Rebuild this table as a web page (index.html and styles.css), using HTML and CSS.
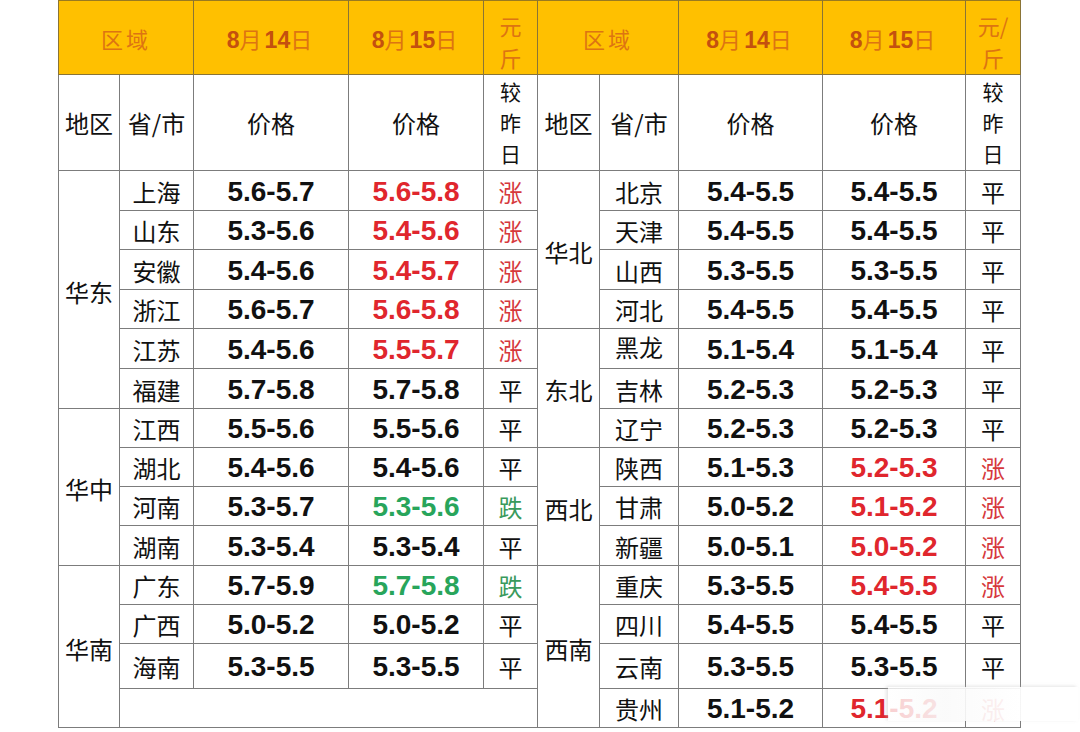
FILE: index.html
```html
<!DOCTYPE html>
<html lang="zh-CN">
<head>
<meta charset="utf-8">
<title>生猪价格</title>
<link rel="stylesheet" href="styles.css">
</head>
<body>
<div class="page">
<table class="price">
<colgroup>
<col class="w-reg"><col class="w-prov"><col class="w-p14"><col class="w-p15"><col class="w-chg">
<col class="w-reg2"><col class="w-prov2"><col class="w-p14b"><col class="w-p15b"><col class="w-chg2">
</colgroup>
<thead>
<tr class="row-head">
<th colspan="2" class="hd">区域</th>
<th class="hd"><b>8</b>月<b>14</b>日</th>
<th class="hd"><b>8</b>月<b>15</b>日</th>
<th class="hd unit">元<br>斤</th>
<th colspan="2" class="hd split">区域</th>
<th class="hd"><b>8</b>月<b>14</b>日</th>
<th class="hd"><b>8</b>月<b>15</b>日</th>
<th class="hd unit">元/<br>斤</th>
</tr>
<tr class="row-sub">
<th class="sub">地区</th>
<th class="sub">省/市</th>
<th class="sub">价格</th>
<th class="sub">价格</th>
<th class="sub stack">较<br>昨<br>日</th>
<th class="sub split">地区</th>
<th class="sub">省/市</th>
<th class="sub">价格</th>
<th class="sub">价格</th>
<th class="sub stack">较<br>昨<br>日</th>
</tr>
</thead>
<tbody>
<tr class="r40">
<td rowspan="6" class="reg">华东</td><td class="prov">上海</td><td class="num">5.6-5.7</td><td class="num up">5.6-5.8</td><td class="chg up">涨</td>
<td rowspan="4" class="reg split">华北</td><td class="prov">北京</td><td class="num">5.4-5.5</td><td class="num">5.4-5.5</td><td class="chg">平</td>
</tr>
<tr class="r39">
<td class="prov">山东</td><td class="num">5.3-5.6</td><td class="num up">5.4-5.6</td><td class="chg up">涨</td>
<td class="prov">天津</td><td class="num">5.4-5.5</td><td class="num">5.4-5.5</td><td class="chg">平</td>
</tr>
<tr class="r40">
<td class="prov">安徽</td><td class="num">5.4-5.6</td><td class="num up">5.4-5.7</td><td class="chg up">涨</td>
<td class="prov">山西</td><td class="num">5.3-5.5</td><td class="num">5.3-5.5</td><td class="chg">平</td>
</tr>
<tr class="r39">
<td class="prov">浙江</td><td class="num">5.6-5.7</td><td class="num up">5.6-5.8</td><td class="chg up">涨</td>
<td class="prov">河北</td><td class="num">5.4-5.5</td><td class="num">5.4-5.5</td><td class="chg">平</td>
</tr>
<tr class="r40">
<td class="prov">江苏</td><td class="num">5.4-5.6</td><td class="num up">5.5-5.7</td><td class="chg up">涨</td>
<td rowspan="3" class="reg split">东北</td><td class="prov high">黑龙</td><td class="num">5.1-5.4</td><td class="num">5.1-5.4</td><td class="chg">平</td>
</tr>
<tr class="r40">
<td class="prov">福建</td><td class="num">5.7-5.8</td><td class="num">5.7-5.8</td><td class="chg">平</td>
<td class="prov">吉林</td><td class="num">5.2-5.3</td><td class="num">5.2-5.3</td><td class="chg">平</td>
</tr>
<tr class="r39">
<td rowspan="4" class="reg">华中</td><td class="prov">江西</td><td class="num">5.5-5.6</td><td class="num">5.5-5.6</td><td class="chg">平</td>
<td class="prov">辽宁</td><td class="num">5.2-5.3</td><td class="num">5.2-5.3</td><td class="chg">平</td>
</tr>
<tr class="r39">
<td class="prov">湖北</td><td class="num">5.4-5.6</td><td class="num">5.4-5.6</td><td class="chg">平</td>
<td rowspan="3" class="reg split">西北</td><td class="prov">陕西</td><td class="num">5.1-5.3</td><td class="num up">5.2-5.3</td><td class="chg up">涨</td>
</tr>
<tr class="r39">
<td class="prov">河南</td><td class="num">5.3-5.7</td><td class="num down">5.3-5.6</td><td class="chg down">跌</td>
<td class="prov">甘肃</td><td class="num">5.0-5.2</td><td class="num up">5.1-5.2</td><td class="chg up">涨</td>
</tr>
<tr class="r40">
<td class="prov">湖南</td><td class="num">5.3-5.4</td><td class="num">5.3-5.4</td><td class="chg">平</td>
<td class="prov">新疆</td><td class="num">5.0-5.1</td><td class="num up">5.0-5.2</td><td class="chg up">涨</td>
</tr>
<tr class="r39">
<td rowspan="4" class="reg">华南</td><td class="prov">广东</td><td class="num">5.7-5.9</td><td class="num down">5.7-5.8</td><td class="chg down">跌</td>
<td rowspan="4" class="reg split">西南</td><td class="prov">重庆</td><td class="num">5.3-5.5</td><td class="num up">5.4-5.5</td><td class="chg up">涨</td>
</tr>
<tr class="r39">
<td class="prov">广西</td><td class="num">5.0-5.2</td><td class="num">5.0-5.2</td><td class="chg">平</td>
<td class="prov">四川</td><td class="num">5.4-5.5</td><td class="num">5.4-5.5</td><td class="chg">平</td>
</tr>
<tr class="r45">
<td class="prov">海南</td><td class="num">5.3-5.5</td><td class="num">5.3-5.5</td><td class="chg">平</td>
<td class="prov">云南</td><td class="num">5.3-5.5</td><td class="num">5.3-5.5</td><td class="chg">平</td>
</tr>
<tr class="r39">
<td colspan="4" class="blank"></td>
<td class="prov">贵州</td><td class="num">5.1-5.2</td><td class="num up">5.1-5.2</td><td class="chg up">涨</td>
</tr>
</tbody>
</table>
<div class="watermark"></div>
</div>
</body>
</html>
```

FILE: styles.css
```css
html, body {
  margin: 0;
  padding: 0;
  background: #ffffff;
}

.page {
  position: relative;
  width: 1080px;
  height: 732px;
  overflow: hidden;
  padding-left: 58px;
  box-sizing: border-box;
}

.price {
  border-collapse: collapse;
  table-layout: fixed;
  width: 962px;
  font-family: "Noto Sans CJK SC", "Noto Sans", sans-serif;
  color: #111111;
  border-left: 1px solid #a0a0a0;
  border-bottom: 1px solid #a0a0a0;
}

.w-reg { width: 61px; }
.w-prov { width: 74px; }
.w-p14 { width: 155px; }
.w-p15 { width: 135px; }
.w-chg { width: 54px; }
.w-reg2 { width: 62px; }
.w-prov2 { width: 79px; }
.w-p14b { width: 144px; }
.w-p15b { width: 143px; }
.w-chg2 { width: 55px; }

.price th,
.price td {
  padding: 0;
  text-align: center;
  vertical-align: middle;
  border: 1px solid #7c7c7c;
  white-space: nowrap;
  font-weight: 400;
}

/* header band */
.row-head { height: 74px; }
.price .row-head th {
  background: #ffc000;
  border-color: #8a7436;
  border-top: 1px solid #9a7a20;
  color: #dd7412;
  font-size: 22px;
}
.price .hd { letter-spacing: 3px; }
.price .hd b {
  font-family: "Liberation Sans", Arial, sans-serif;
  font-weight: 700;
  font-size: 23px;
  color: #c4500f;
  letter-spacing: 0;
}
.price .row-head .unit {
  font-size: 22px;
  line-height: 32px;
  letter-spacing: 0;
  padding-top: 6px;
}

/* sub header */
.row-sub { height: 96px; }
.price .sub {
  font-size: 24px;
  color: #111111;
}
.price .sub.stack {
  font-size: 21px;
  line-height: 31px;
  white-space: normal;
}

/* body rows */
.r39 { height: 39px; }
.r40 { height: 40px; }
.r45 { height: 45px; }

.price .reg,
.price .prov,
.price .chg {
  font-size: 24px;
  line-height: 28px;
}
.price .reg { padding-top: 4px; }
.price .prov,
.price .chg { padding-top: 2px; }
.price .prov.high { padding-top: 0; padding-bottom: 4px; }

.price .num {
  font-family: "Liberation Sans", Arial, sans-serif;
  font-weight: 700;
  font-size: 28px;
  line-height: 30px;
  padding-top: 2px;
  color: #111111;
}

.price .up { color: #e0262d; }
.price .chg.up { color: #d6383c; }
.price .down { color: #28a55b; }
.price .chg.down { color: #3a9a5c; }

.price .blank { border-right: 1px solid #7c7c7c; }

/* weibo watermark overlay at the bottom-right corner */
.watermark {
  position: absolute;
  left: 888px;
  top: 687px;
  width: 190px;
  height: 34px;
  background: linear-gradient(90deg, rgba(255, 255, 255, 0.78), rgba(250, 250, 250, 0.9) 30%, rgba(255, 255, 255, 0.93) 70%, rgba(255, 255, 255, 0.85));
  box-shadow: -2px -1px 3px rgba(180, 180, 180, 0.35);
}
```
